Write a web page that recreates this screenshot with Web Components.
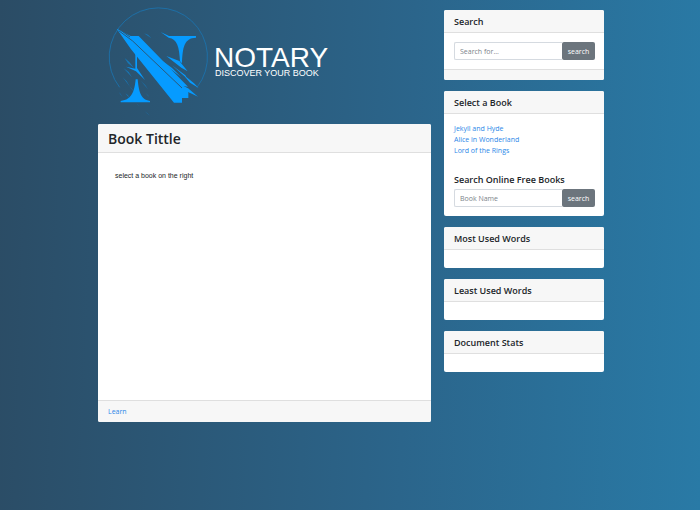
<!DOCTYPE html>
<html lang="en">
<head>
<meta charset="utf-8">
<title>Notary</title>
<style>
  html { min-height: 100%; background: linear-gradient(92deg, #2b4c65, #2b658b 58%, #297aa6); }
  body { margin: 0; font-family: "Open Sans", "Noto Sans", sans-serif; font-size: 7px; line-height: 11px; color: #212529; }
</style>
</head>
<body>
<notary-app></notary-app>
<script>
const define = (name, html, init) => {
  const template = document.createElement('template');
  template.innerHTML = html;
  customElements.define(name, class extends HTMLElement {
    constructor() {
      super();
      this.attachShadow({ mode: 'open' }).append(template.content.cloneNode(true));
    }
    connectedCallback() { if (init) init(this, this.shadowRoot); }
  });
};

define('notary-logo', `
<style>
  :host { display: flex; align-items: flex-start; gap: 4px; color: #fff; font-family: "Liberation Sans", Arial, sans-serif; }
  svg { width: 112px; height: 120px; flex: none; }
  .words { padding-top: 46px; }
  .name { font-size: 28px; line-height: 24px; }
  .tag { font-size: 9px; line-height: 7px; padding-left: 1px; }
</style>
<svg viewBox="0 0 336 360" fill="#069bff" aria-hidden="true">
  <path d="M65 262A147.4 147.4 0 1 1 297 262" fill="none" stroke="#1b74b0" stroke-width="2.5"/>
  <!-- diagonal stroke of the N -->
  <path d="M56 86L98 108H122L270 260L254 258L271 266V294H252V308H228L98 146Z"/>
  <path d="M252 256L272 266L300 290L272 277L250 264Z"/>
  <path d="M62 92L104 123L252 264M70 92L96 111" fill="none" stroke="#2b597b" stroke-width="3"/>
  <!-- right stem and serif -->
  <path d="M188 96L213 108H294V113C258 114 254 142 252 190L246 184C244 142 238 116 212 113Z"/>
  <!-- left stem, blade and foot -->
  <path d="M112 148L117 152V204L141 240L114 214L84 200L112 206Z"/>
  <path d="M68 307V303C104 300 110 268 113 238H119C122 268 126 300 156 303V307Z"/>
  <!-- slivers on both sides -->
  <path d="M205 168L244 183L269 214L250 203ZM174 168L222 204L250 232L214 204ZM222 196L262 226L268 236ZM254 222L288 250L302 264L276 248Z"/>
  <g fill="#1679ba">
    <path d="M80 174L94 186L108 204L90 190ZM76 204L92 216L102 232ZM74 232L86 244L96 260ZM128 242L142 256L150 268ZM94 258L102 266L108 276ZM138 100L150 104L160 115ZM62 276L68 282L74 292ZM82 280L90 286L94 294ZM142 278L150 286L154 292ZM140 334L148 340L156 348ZM114 310L120 314L126 320Z"/>
  </g>
</svg>
<div class="words"><div class="name">NOTARY</div><div class="tag">DISCOVER YOUR BOOK</div></div>`);

define('info-card', `
<style>
  :host { display: flex; flex-direction: column; background: #fff; border-radius: 2px; overflow: hidden; }
  header { background: #f7f7f7; border-bottom: 1px solid #dfdfdf; padding: 6px 10px 4px; font-size: 9px; line-height: 12px; font-weight: 600; }
  h2 { margin: 0; font: inherit; }
  :host([large]) header { font-size: 14px; line-height: 18px; }
  .body { flex: 1; padding: 9px 9px 9px 10px; }
  footer { background: #f7f7f7; border-top: 1px solid #dfdfdf; padding: 5px 10px; }
  :host(:not([footer])) footer { display: none; }
</style>
<header><h2></h2></header>
<div class="body"><slot></slot></div>
<footer><slot name="footer"></slot></footer>`, (host, root) => {
  root.querySelector('h2').textContent = host.getAttribute('heading');
});

define('search-box', `
<style>
  :host { display: block; }
  form { display: flex; }
  input { flex: 1; min-width: 0; box-sizing: border-box; height: 18px; border: 1px solid #d5dae0; border-radius: 2px 0 0 2px; border-right: 0; padding: 0 5px; font: inherit; color: #495057; background: #fff; }
  input::placeholder { color: #7b838a; opacity: 1; }
  button { height: 18px; width: 33px; padding: 0; border: 0; border-radius: 2px; background: #6c757d; color: #fff; font: inherit; }
</style>
<form><input type="text"><button type="button">search</button></form>`, (host, root) => {
  const input = root.querySelector('input');
  input.placeholder = host.getAttribute('placeholder');
  input.setAttribute('aria-label', host.getAttribute('label'));
});

define('notary-app', `
<style>
  :host { display: grid; grid-template-columns: minmax(0, 333fr) minmax(0, 160fr); column-gap: 13px; align-items: start; width: calc(100% - 192px); max-width: 1100px; margin: 0 auto; padding-left: 2px; box-sizing: border-box; }
  a { color: #2b87e8; text-decoration: none; }
  main { display: grid; gap: 4px; }
  .reader { min-height: 298px; }
  .text { margin: 8px 7px; font-family: "Liberation Sans", Arial, sans-serif; }
  aside { display: grid; gap: 11px; padding-top: 10px; }
  ul { list-style: none; margin: 0; padding: 0; }
  h3 { margin: 18px 0 3px; font-size: 9px; line-height: 12px; font-weight: 600; }
</style>
<main>
  <notary-logo></notary-logo>
  <info-card class="reader" heading="Book Tittle" large footer>
    <p class="text">select a book on the right</p>
    <a slot="footer" href="#learn">Learn</a>
  </info-card>
</main>
<aside>
  <info-card heading="Search" footer><search-box placeholder="Search for..." label="Search"></search-box></info-card>
  <info-card heading="Select a Book">
    <ul><li><a href="#jekyll">Jekyll and Hyde</a></li><li><a href="#alice">Alice in Wonderland</a></li><li><a href="#rings">Lord of the Rings</a></li></ul>
    <h3>Search Online Free Books</h3>
    <search-box placeholder="Book Name" label="Book name"></search-box>
  </info-card>
  <info-card heading="Most Used Words"></info-card>
  <info-card heading="Least Used Words"></info-card>
  <info-card heading="Document Stats"></info-card>
</aside>`);
</script>
</body>
</html>
